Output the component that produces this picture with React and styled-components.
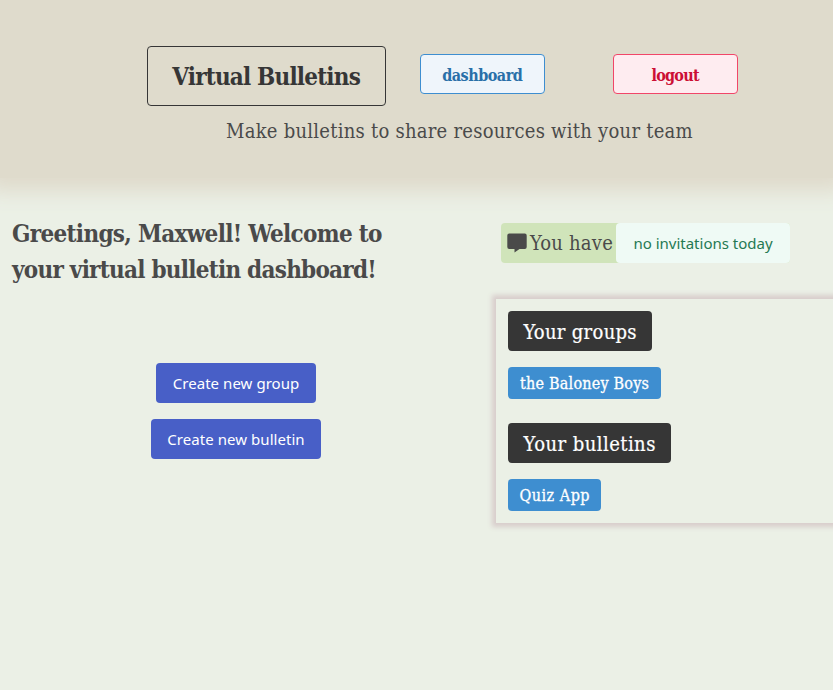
import React from "react";
import styled, { createGlobalStyle } from "styled-components";

const slab = `"Roboto Slab", "DejaVu Serif Condensed", "DejaVu Serif", serif`;
const sans = `"Segoe UI", "Noto Sans", "Open Sans", sans-serif`;

const GlobalStyle = createGlobalStyle`
  * { box-sizing: border-box; }
  html, body { margin: 0; background: #ebf0e6; overflow: hidden; }
  body { font-family: ${slab}; font-size: 16px; color: #4a4a4a; }
  h1, h2, p { margin: 0; font-weight: 400; }
`;

const Page = styled.div`
  width: 833px;
  height: 690px;
  overflow: hidden;
`;

const Header = styled.header`
  height: 178px;
  padding: 46px 0 0;
  background: #dfdbcc;
  box-shadow: 0 0 20px 13px #dfdacb;
`;

const Nav = styled.nav`
  display: flex;
  align-items: flex-start;
  padding-left: 147px;
`;

const Label = styled.span`
  display: inline-block;
  white-space: nowrap;
  letter-spacing: ${(p) => p.$track || 0}px;
  margin-right: ${(p) => -(p.$track || 0)}px;
`;

const Brand = styled.h1`
  display: flex;
  align-items: center;
  justify-content: center;
  width: 239px;
  height: 60px;
  border: 1px solid #363636;
  border-radius: 4px;
  color: #363636;
  font-size: 24px;
  font-weight: 700;
`;

const NavButton = styled.button`
  width: 125px;
  height: 40px;
  margin: 8px 0 0 ${(p) => p.$gap}px;
  padding: 2px 0 0;
  border: 1px solid ${(p) => p.$line};
  border-radius: 4px;
  background: ${(p) => p.$fill};
  color: ${(p) => p.$ink};
  font: 700 16px ${slab};
`;

const Tagline = styled.p`
  padding: 10px 0 0 226px;
  font-size: 20px;
  line-height: 30px;
`;

const Columns = styled.main`
  display: grid;
  grid-template-columns: 496px 1fr;
`;

const Welcome = styled.section`
  padding: 38px 0 0 12px;
`;

const Greeting = styled.h2`
  font-size: 24px;
  font-weight: 700;
  line-height: 36px;
`;

const Actions = styled.div`
  display: flex;
  flex-direction: column;
  align-items: center;
  gap: 16px;
  width: 448px;
  padding-top: 75px;
`;

const ActionButton = styled.button`
  width: ${(p) => p.$width}px;
  height: 40px;
  padding: 0;
  border: 0;
  border-radius: 4px;
  background: #485fc7;
  color: #fff;
  font: 400 15px ${sans};
`;

const Side = styled.section`
  padding-top: 45px;
`;

const Invitations = styled.div`
  display: flex;
  align-items: center;
  width: 289px;
  height: 40px;
  margin-left: 5px;
  padding-left: 6px;
  border-radius: 4px;
  background: #d0e4ba;
  font-size: 20px;
`;

const ChatIcon = styled.svg`
  flex: none;
  width: 20px;
  height: 20px;
  margin-right: 3px;
`;

const Notice = styled.span`
  display: flex;
  align-items: center;
  justify-content: center;
  width: 174px;
  height: 40px;
  margin-left: auto;
  border-radius: 4px;
  background: #effaf5;
  color: #257953;
  font: 400 15px ${sans};
`;

const Panel = styled.div`
  display: flex;
  flex-direction: column;
  align-items: flex-start;
  height: 224px;
  margin: 36px -20px 0 0;
  padding: 12px;
  box-shadow: 0 0 5px 4px #d8cdcc;
`;

const Heading = styled.h2`
  display: flex;
  flex: none;
  align-items: center;
  justify-content: center;
  width: ${(p) => p.$width}px;
  height: 40px;
  padding-top: 1px;
  border-radius: 4px;
  background: #363636;
  color: #fff;
  font-size: 20px;
  -webkit-text-stroke: 0.2px #fff;
`;

const Tag = styled.button`
  flex: none;
  width: ${(p) => p.$width}px;
  height: 32px;
  margin: 16px 0 24px;
  padding: 0;
  border: 0;
  border-radius: 4px;
  background: #3e8ed0;
  color: #fff;
  font: 400 16px ${slab};
  -webkit-text-stroke: 0.3px #fff;
`;

export default function App() {
  return (
    <Page>
      <GlobalStyle />
      <Header>
        <Nav>
          <Brand><Label $track={-0.8}>Virtual Bulletins</Label></Brand>
          <NavButton $gap={34} $line="#3e8ed0" $fill="#eff5fb" $ink="#296fa8"><Label $track={-0.5}>dashboard</Label></NavButton>
          <NavButton $gap={68} $line="#f14668" $fill="#feecf0" $ink="#cc0f35"><Label $track={-0.75}>logout</Label></NavButton>
        </Nav>
        <Tagline><Label $track={0.25}>Make bulletins to share resources with your team</Label></Tagline>
      </Header>
      <Columns>
        <Welcome>
          <Greeting>
            <Label $track={-0.68}>Greetings, Maxwell! Welcome to</Label><br />
            <Label $track={-0.74}>your virtual bulletin dashboard!</Label>
          </Greeting>
          <Actions>
            <ActionButton $width={160}><Label $track={0.05}>Create new group</Label></ActionButton>
            <ActionButton $width={170}><Label $track={0.05}>Create new bulletin</Label></ActionButton>
          </Actions>
        </Welcome>
        <Side>
          <Invitations>
            <ChatIcon viewBox="0 0 20 20" aria-hidden="true">
              <path d="M2.2 0.5h15.6a1.9 1.9 0 0 1 1.9 1.9v11.7a1.9 1.9 0 0 1-1.9 1.9h-5.3l-5 3.4V16H2.2a1.9 1.9 0 0 1-1.9-1.9V2.4A1.9 1.9 0 0 1 2.2.5z" fill="#4a4a4a" />
            </ChatIcon>
            <Label $track={0.2}>You have</Label>
            <Notice><Label>no invitations today</Label></Notice>
          </Invitations>
          <Panel>
            <Heading $width={144}><Label $track={0.3}>Your groups</Label></Heading>
            <Tag $width={153}><Label $track={0.2}>the Baloney Boys</Label></Tag>
            <Heading $width={163}><Label $track={0.45}>Your bulletins</Label></Heading>
            <Tag $width={93}><Label $track={0.5}>Quiz App</Label></Tag>
          </Panel>
        </Side>
      </Columns>
    </Page>
  );
}
